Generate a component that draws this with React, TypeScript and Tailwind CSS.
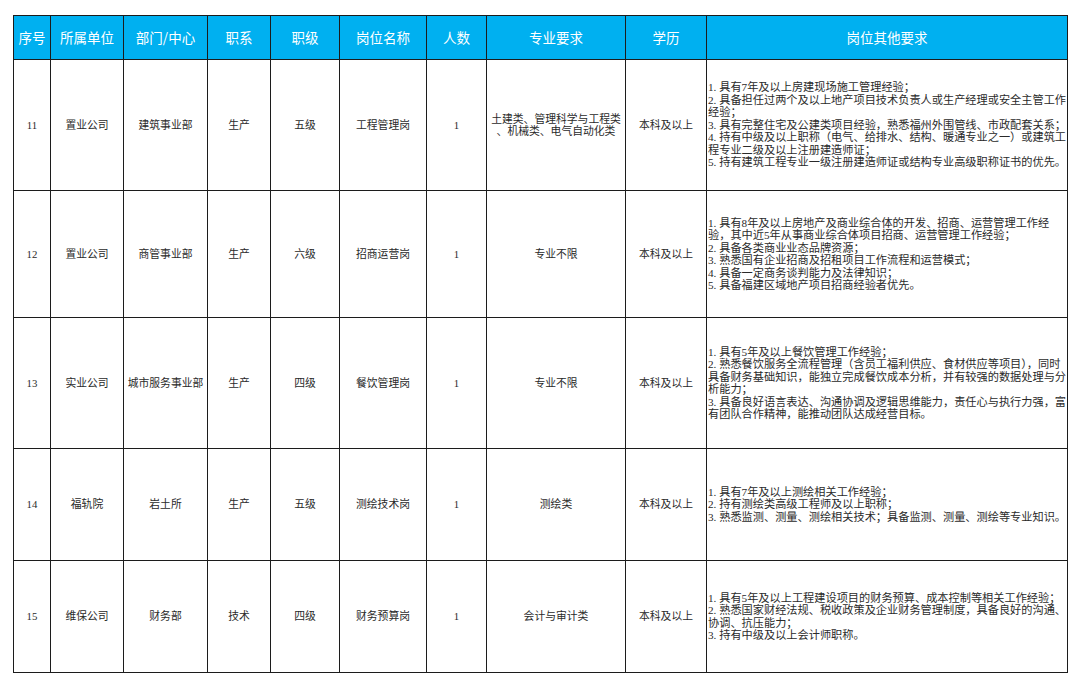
const columns = [
  { title: '序号', width: 'w-[37px]' },
  { title: '所属单位', width: 'w-[73px]' },
  { title: '部门/中心', width: 'w-[84px]' },
  { title: '职系', width: 'w-[63px]' },
  { title: '职级', width: 'w-[69px]' },
  { title: '岗位名称', width: 'w-[87px]' },
  { title: '人数', width: 'w-[60px]' },
  { title: '专业要求', width: 'w-[139px]' },
  { title: '学历', width: 'w-[81px]' },
  { title: '岗位其他要求', width: 'w-[361px]' },
];

interface Row {
  no: string;
  unit: string;
  dept: string;
  series: string;
  level: string;
  post: string;
  count: string;
  major: string[];
  edu: string;
  other: string[];
  height: string;
}

const rows: Row[] = [
  {
    no: '11',
    unit: '置业公司',
    dept: '建筑事业部',
    series: '生产',
    level: '五级',
    post: '工程管理岗',
    count: '1',
    major: ['土建类、管理科学与工程类', '、机械类、电气自动化类'],
    edu: '本科及以上',
    other: [
      '1. 具有7年及以上房建现场施工管理经验；',
      '2. 具备担任过两个及以上地产项目技术负责人或生产经理或安全主管工作',
      '经验；',
      '3. 具有完整住宅及公建类项目经验，熟悉福州外围管线、市政配套关系；',
      '4. 持有中级及以上职称（电气、给排水、结构、暖通专业之一）或建筑工',
      '程专业二级及以上注册建造师证；',
      '5. 持有建筑工程专业一级注册建造师证或结构专业高级职称证书的优先。',
    ],
    height: 'h-[131px]',
  },
  {
    no: '12',
    unit: '置业公司',
    dept: '商管事业部',
    series: '生产',
    level: '六级',
    post: '招商运营岗',
    count: '1',
    major: ['专业不限'],
    edu: '本科及以上',
    other: [
      '1. 具有8年及以上房地产及商业综合体的开发、招商、运营管理工作经',
      '验，其中近5年从事商业综合体项目招商、运营管理工作经验；',
      '2. 具备各类商业业态品牌资源；',
      '3. 熟悉国有企业招商及招租项目工作流程和运营模式；',
      '4. 具备一定商务谈判能力及法律知识；',
      '5. 具备福建区域地产项目招商经验者优先。',
    ],
    height: 'h-[127px]',
  },
  {
    no: '13',
    unit: '实业公司',
    dept: '城市服务事业部',
    series: '生产',
    level: '四级',
    post: '餐饮管理岗',
    count: '1',
    major: ['专业不限'],
    edu: '本科及以上',
    other: [
      '1. 具有5年及以上餐饮管理工作经验；',
      '2. 熟悉餐饮服务全流程管理（含员工福利供应、食材供应等项目），同时',
      '具备财务基础知识，能独立完成餐饮成本分析，并有较强的数据处理与分',
      '析能力；',
      '3. 具备良好语言表达、沟通协调及逻辑思维能力，责任心与执行力强，富',
      '有团队合作精神，能推动团队达成经营目标。',
    ],
    height: 'h-[131px]',
  },
  {
    no: '14',
    unit: '福轨院',
    dept: '岩土所',
    series: '生产',
    level: '五级',
    post: '测绘技术岗',
    count: '1',
    major: ['测绘类'],
    edu: '本科及以上',
    other: [
      '1. 具有7年及以上测绘相关工作经验；',
      '2. 持有测绘类高级工程师及以上职称；',
      '3. 熟悉监测、测量、测绘相关技术；具备监测、测量、测绘等专业知识。',
    ],
    height: 'h-[112px]',
  },
  {
    no: '15',
    unit: '维保公司',
    dept: '财务部',
    series: '技术',
    level: '四级',
    post: '财务预算岗',
    count: '1',
    major: ['会计与审计类'],
    edu: '本科及以上',
    other: [
      '1. 具有5年及以上工程建设项目的财务预算、成本控制等相关工作经验；',
      '2. 熟悉国家财经法规、税收政策及企业财务管理制度，具备良好的沟通、',
      '协调、抗压能力；',
      '3. 持有中级及以上会计师职称。',
    ],
    height: 'h-[112px]',
  },
];

const cell = 'border border-[#1c1c1c] text-center align-middle p-0';

export default function App() {
  return (
    <div className="w-[1073px] h-[682px] bg-white pt-[15px] pl-[13px]">
      <table className="table-fixed border-collapse w-[1054px] text-[#2a2a2a] font-['Liberation_Serif','Noto_Sans_CJK_SC',serif] text-[10.8px] leading-[12.5px]">
        <colgroup>
          {columns.map((c) => (
            <col key={c.title} className={c.width} />
          ))}
        </colgroup>
        <thead>
          <tr className="h-[44px] bg-[#00b0f0]">
            {columns.map((c) => (
              <th
                key={c.title}
                className={`${cell} text-white font-normal text-[13.5px] font-['Noto_Sans_CJK_SC',sans-serif]`}
              >
                {c.title}
              </th>
            ))}
          </tr>
        </thead>
        <tbody>
          {rows.map((r) => (
            <tr key={r.no} className={r.height}>
              <td className={cell}>{r.no}</td>
              <td className={cell}>{r.unit}</td>
              <td className={cell}>{r.dept}</td>
              <td className={cell}>{r.series}</td>
              <td className={cell}>{r.level}</td>
              <td className={cell}>{r.post}</td>
              <td className={cell}>{r.count}</td>
              <td className={cell}>
                {r.major.map((m) => (
                  <div key={m} className="whitespace-nowrap">{m}</div>
                ))}
              </td>
              <td className={cell}>{r.edu}</td>
              <td className={`${cell} text-left pl-[1px] text-[11.2px]`}>
                {r.other.map((line) => (
                  <div key={line} className="whitespace-nowrap">{line}</div>
                ))}
              </td>
            </tr>
          ))}
        </tbody>
      </table>
    </div>
  );
}
